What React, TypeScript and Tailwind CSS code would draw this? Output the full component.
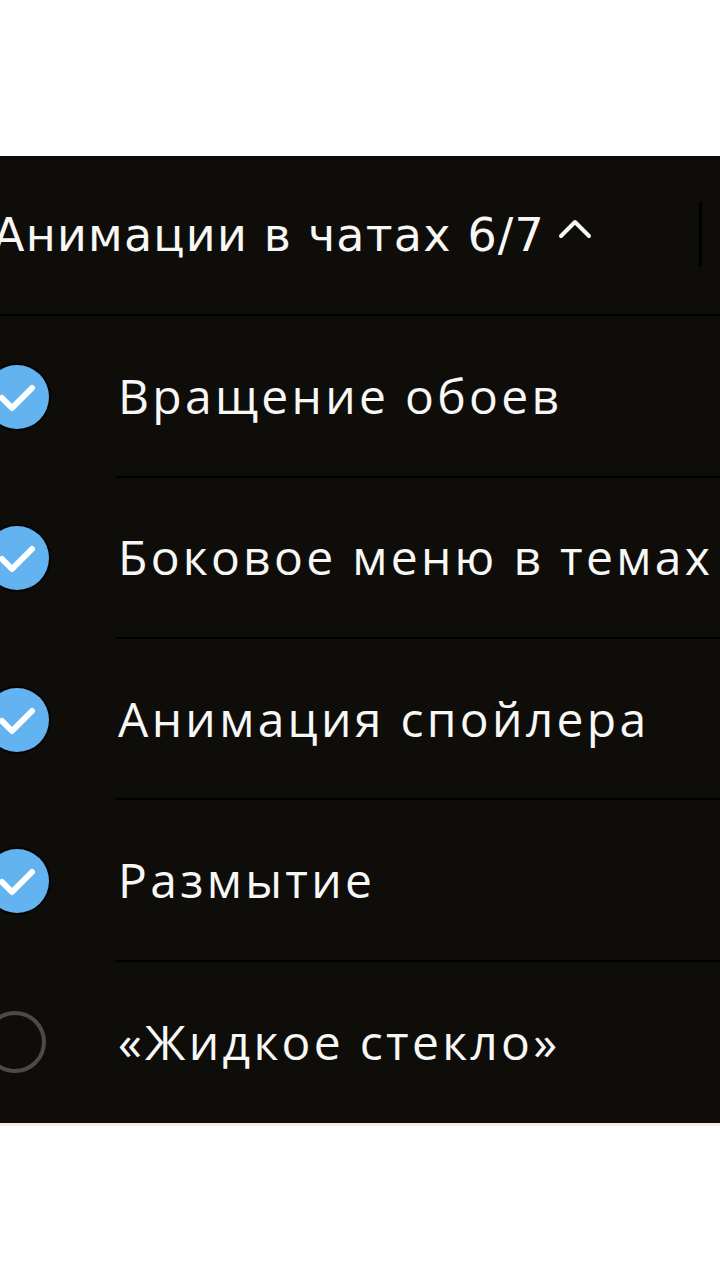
import React from 'react';

interface Item {
  label: string;
  checked: boolean;
}

const items: Item[] = [
  { label: 'Вращение обоев', checked: true },
  { label: 'Боковое меню в темах', checked: true },
  { label: 'Анимация спойлера', checked: true },
  { label: 'Размытие', checked: true },
  { label: '«Жидкое стекло»', checked: false },
];

const CheckCircle: React.FC<{ checked: boolean }> = ({ checked }) => {
  if (!checked) {
    return (
      <svg width="66" height="66" viewBox="0 0 66 66">
        <circle cx="33" cy="33" r="29" fill="none" stroke="#4b4a48" strokeWidth="4" />
      </svg>
    );
  }
  return (
    <svg width="70" height="70" viewBox="0 0 70 70">
      <circle cx="35" cy="35" r="34" fill="#050403" />
      <circle cx="35" cy="35" r="32" fill="#62b3ef" />
      <path d="M20 36 L30 46 L50 26" fill="none" stroke="#ffffff" strokeWidth="6" strokeLinecap="round" strokeLinejoin="round" />
    </svg>
  );
};

const App: React.FC = () => {
  return (
    <div className="w-[720px] h-[1280px] bg-white overflow-hidden">
      <div className="h-[156px]" />
      <div className="bg-[#0e0d0a] h-[967px] flex flex-col">
        {/* header */}
        <div className="h-[161px] flex items-center border-b-2 border-black">
          <div
            className="-ml-[7px] flex items-center text-[#f7f7f5] text-[46px] tracking-[1.2px]"
            style={{ fontFamily: '"DejaVu Sans", sans-serif' }}
          >
            <span>Анимации в чатах 6/7</span>
            <svg className="ml-[12px] mb-[12px]" width="36" height="26" viewBox="0 0 36 26">
              <path d="M4 20 L18 6 L32 20" fill="none" stroke="#f7f7f5" strokeWidth="4" strokeLinecap="round" strokeLinejoin="round" />
            </svg>
          </div>
          <div className="ml-auto mr-[18px] w-[3px] h-[64px] bg-black" />
        </div>

        {/* rows */}
        {items.map((item, i) => (
          <div key={item.label} className="h-[162px] flex">
            <div className="w-[116px] flex items-center">
              <div className="-ml-[18px] flex items-center justify-center">
                <CheckCircle checked={item.checked} />
              </div>
            </div>
            <div
              className={
                'flex-1 flex items-center ' + (i < items.length - 1 ? 'border-b-2 border-black' : '')
              }
            >
              <span
                className="ml-[2px] text-[#f7f7f5] text-[48px] tracking-[3.3px] whitespace-nowrap"
                style={{ fontFamily: '"Open Sans", "Noto Sans", sans-serif' }}
              >
                {item.label}
              </span>
            </div>
          </div>
        ))}
      </div>
      <div className="h-[3px] bg-[#f6ece4]" />
    </div>
  );
};

export default App;
